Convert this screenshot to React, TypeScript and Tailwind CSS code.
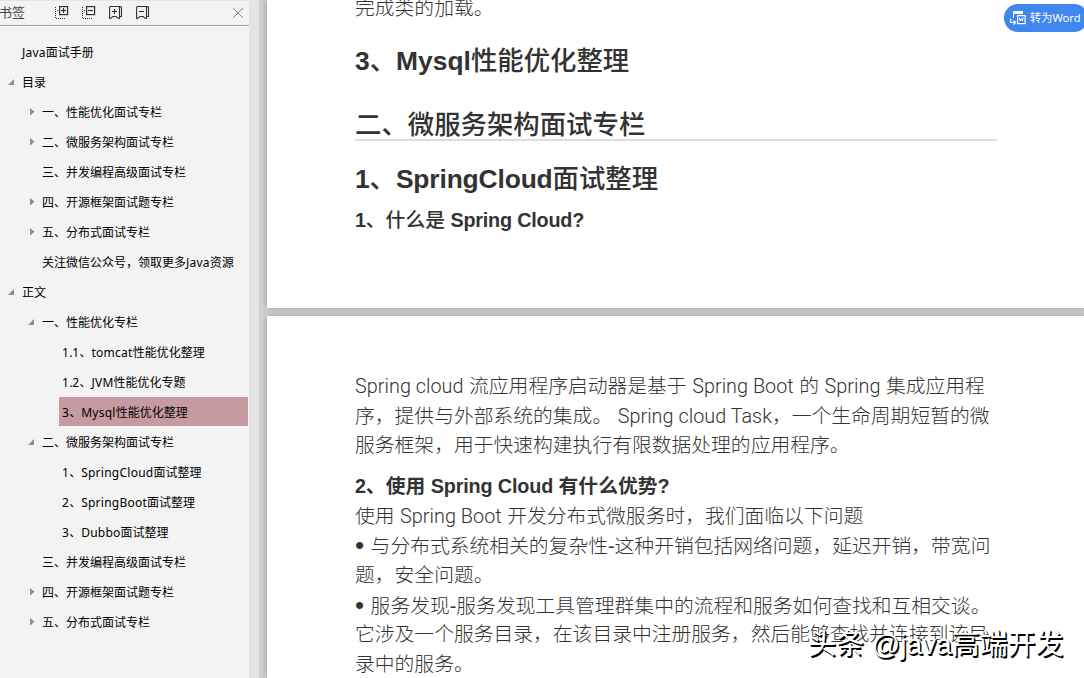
import { clsx } from 'clsx';

type Arrow = 'open' | 'closed' | 'none';

interface Bookmark {
  label: string;
  level: 0 | 1 | 2;
  arrow: Arrow;
  active?: boolean;
}

const BOOKMARKS: Bookmark[] = [
  { label: 'Java面试手册', level: 0, arrow: 'none' },
  { label: '目录', level: 0, arrow: 'open' },
  { label: '一、性能优化面试专栏', level: 1, arrow: 'closed' },
  { label: '二、微服务架构面试专栏', level: 1, arrow: 'closed' },
  { label: '三、并发编程高级面试专栏', level: 1, arrow: 'none' },
  { label: '四、开源框架面试题专栏', level: 1, arrow: 'closed' },
  { label: '五、分布式面试专栏', level: 1, arrow: 'closed' },
  { label: '关注微信公众号，领取更多Java资源', level: 1, arrow: 'none' },
  { label: '正文', level: 0, arrow: 'open' },
  { label: '一、性能优化专栏', level: 1, arrow: 'open' },
  { label: '1.1、tomcat性能优化整理', level: 2, arrow: 'none' },
  { label: '1.2、JVM性能优化专题', level: 2, arrow: 'none' },
  { label: '3、Mysql性能优化整理', level: 2, arrow: 'none', active: true },
  { label: '二、微服务架构面试专栏', level: 1, arrow: 'open' },
  { label: '1、SpringCloud面试整理', level: 2, arrow: 'none' },
  { label: '2、SpringBoot面试整理', level: 2, arrow: 'none' },
  { label: '3、Dubbo面试整理', level: 2, arrow: 'none' },
  { label: '三、并发编程高级面试专栏', level: 1, arrow: 'none' },
  { label: '四、开源框架面试题专栏', level: 1, arrow: 'closed' },
  { label: '五、分布式面试专栏', level: 1, arrow: 'closed' },
];

const LEVEL_PADDING: Record<Bookmark['level'], string> = {
  0: 'pl-[7px]',
  1: 'pl-[27px]',
  2: 'pl-[47px]',
};

const INTRO = [
  'Spring cloud 流应用程序启动器是基于 Spring Boot 的 Spring 集成应用程',
  '序，提供与外部系统的集成。 Spring cloud Task，一个生命周期短暂的微',
  '服务框架，用于快速构建执行有限数据处理的应用程序。',
];

const ADVANTAGES = [
  '使用 Spring Boot 开发分布式微服务时，我们面临以下问题',
  '• 与分布式系统相关的复杂性-这种开销包括网络问题，延迟开销，带宽问',
  '题，安全问题。',
  '• 服务发现-服务发现工具管理群集中的流程和服务如何查找和互相交谈。',
  '它涉及一个服务目录，在该目录中注册服务，然后能够查找并连接到该目',
  '录中的服务。',
];

// Wraps every run of Latin text, so that it can be styled apart from the Chinese
function Mixed({ text, latin }: { text: string; latin: string }) {
  return (
    <>
      {text.split(/([A-Za-z0-9?]+(?: [A-Za-z]+)*\??|•)/).map((part, i) => {
        if (part === '•') return <span key={i} className="relative top-px mr-px text-[26px] leading-none">•</span>;
        return i % 2 ? (
          <span key={i} className={latin}>
            {part}
          </span>
        ) : (
          part
        );
      })}
    </>
  );
}

function TreeIcon({ plus }: { plus?: boolean }) {
  return (
    <svg width="14" height="14" viewBox="0 0 14 14" fill="none" stroke="#333">
      <path d="M0.5 1V13M1 12.5H10" strokeDasharray="1 1" />
      <path d="M2 4.5H4" strokeDasharray="1 1" />
      <rect x="4.6" y="0.6" width="8" height="8" strokeWidth="1.2" />
      <path d="M6 4.5H11" strokeWidth="1.2" />
      {plus && <path d="M8.5 2V7" strokeWidth="1.2" />}
    </svg>
  );
}

function MarkIcon({ plus }: { plus?: boolean }) {
  return (
    <svg width="14" height="14" viewBox="0 0 14 14" fill="none" stroke="#333" strokeWidth="1.1">
      <path d="M0.6 1.5a1 1 0 0 1 1-1H9.5a1 1 0 0 1 1 1V12.5H9.5L7 10.5H4L1.5 12.5H0.6Z" />
      <path d="M10 0.6H11.5a1 1 0 0 1 1 1V10.5H10.5" />
      <path d="M3 5.5H8" />
      {plus && <path d="M5.5 3V8" />}
    </svg>
  );
}

function TreeArrow({ arrow }: { arrow: Arrow }) {
  return (
    <svg width="15" height="10" viewBox="0 0 15 10" fill="#8c8c8c" className="shrink-0">
      {arrow === 'open' && <path d="M7 2V8H1Z" />}
      {arrow === 'closed' && <path d="M3 1L7.5 4.7L3 8.5Z" />}
    </svg>
  );
}

function BookmarkLabel({ label }: { label: string }) {
  return (
    <span className="pt-0.5 text-xs whitespace-nowrap text-black">
      <Mixed text={label} latin="tracking-[0.25px]" />
    </span>
  );
}

function Sidebar() {
  return (
    <aside className="flex w-[249px] shrink-0 flex-col border-t border-[#e4e4e4] bg-[#f3f3f3] font-['Noto_Sans','Noto_Sans_CJK_SC',sans-serif]">
      <header className="flex h-[25px] shrink-0 items-center border-b border-[#a0a0a0] text-[#444]">
        <span className="-ml-px w-[56px] text-[13px]">书签</span>
        <div className="flex gap-[13px]">
          <TreeIcon plus />
          <TreeIcon />
          <MarkIcon plus />
          <MarkIcon />
        </div>
        <svg width="12" height="12" viewBox="0 0 12 12" stroke="#858585" className="mr-[5px] ml-auto">
          <path d="M1 1L11 11M11 1L1 11" />
        </svg>
      </header>
      <nav className="flex flex-col border-t border-white pt-[10px]">
        {BOOKMARKS.map((b, i) => (
          <div key={i} className={clsx('flex h-[30px] items-center', LEVEL_PADDING[b.level])}>
            {b.active ? (
              <div className="ml-3 flex h-[29px] w-[189px] items-center self-start bg-[#c59aa0] pt-px pl-[3px]">
                <BookmarkLabel label={b.label} />
              </div>
            ) : (
              <>
                <TreeArrow arrow={b.arrow} />
                <BookmarkLabel label={b.label} />
              </>
            )}
          </div>
        ))}
      </nav>
    </aside>
  );
}

function Paragraph({ lines }: { lines: string[] }) {
  return (
    <div className="text-[19.8px] font-light">
      {lines.map((line) => (
        <p key={line} className="h-[29.7px] leading-[29.7px] whitespace-pre">
          <Mixed text={line} latin="font-['Roboto'] tracking-[0.04px]" />
        </p>
      ))}
    </div>
  );
}

function WordButton() {
  return (
    <button className="absolute top-1 left-[1004px] flex h-7 w-[84px] items-center gap-1 rounded-full bg-[#3f87ee] pl-[6px] text-xs whitespace-nowrap text-white">
      <svg width="16" height="15" viewBox="0 0 16 15" fill="none" stroke="white">
        <path d="M3.5 7V0.5H12.5V3" />
        <path d="M3 1.5H13" strokeWidth="3" />
        <rect x="7.6" y="4.6" width="7.5" height="8" strokeWidth="1.2" />
        <path d="M9.3 6.5L10.2 10L11.3 7.5L12.4 10L13.3 6.5" />
        <path d="M0.6 7.5V11.5H5M3.5 9.5L5.5 11.5L3.5 13.5" strokeWidth="1.2" />
      </svg>
      <span className="font-['Noto_Sans','Noto_Sans_CJK_SC',sans-serif] text-[11.2px]">转为Word</span>
    </button>
  );
}

export default function App() {
  return (
    <div lang="zh-CN" className="relative flex h-[678px] w-[1084px] overflow-hidden">
      <Sidebar />
      <div className="w-[10px] shrink-0 bg-[#e4e4e4]" />
      <main className="flex min-w-0 flex-1 flex-col gap-2 bg-[#d0d0d0] pl-2 font-['Liberation_Sans','Noto_Sans_CJK_SC',sans-serif] text-[#333]">
        <section className="h-[308px] shrink-0 bg-white pr-[87px] pl-[88px] shadow-[0_0_6px_rgba(0,0,0,0.28)]">
          <div className="-mt-[6px]">
            <Paragraph lines={['完成类的加载。']} />
          </div>
          <h2 className="mt-[17px] text-[26.4px] leading-10 font-medium">
            <Mixed text="3、Mysql性能优化整理" latin="font-bold" />
          </h2>
          <h1 className="mt-[25px] h-[35px] border-b-2 border-[#dcdcdc] text-[26.4px] leading-[38px] font-medium">二、微服务架构面试专栏</h1>
          <h2 className="mt-[18px] text-[26.4px] leading-10 font-medium">
            <Mixed text="1、SpringCloud面试整理" latin="font-bold tracking-[-0.15px]" />
          </h2>
          <h4 className="mt-[6px] text-[19.8px] leading-[30px] font-medium">
            <Mixed text="1、什么是 Spring Cloud?" latin="font-bold tracking-[-0.2px]" />
          </h4>
        </section>
        <section className="h-[362px] shrink-0 bg-white pt-[56px] pl-[88px] shadow-[0_0_6px_rgba(0,0,0,0.28)]">
          <Paragraph lines={INTRO} />
          <h4 className="mt-[10px] text-[19.8px] leading-[30px] font-bold">
            <Mixed text="2、使用 Spring Cloud 有什么优势?" latin="tracking-[-0.15px]" />
          </h4>
          <div className="pt-[0.6px]">
            <Paragraph lines={ADVANTAGES} />
          </div>
        </section>
      </main>
      <WordButton />
      <div className="absolute top-[625px] left-[808px] font-['Liberation_Sans','Noto_Sans_CJK_SC',sans-serif] text-[28px] leading-10 whitespace-pre text-white [text-shadow:1px_1px_0_#000,1.5px_1.5px_0_#000]">
        头条 @java高端开发
      </div>
    </div>
  );
}
